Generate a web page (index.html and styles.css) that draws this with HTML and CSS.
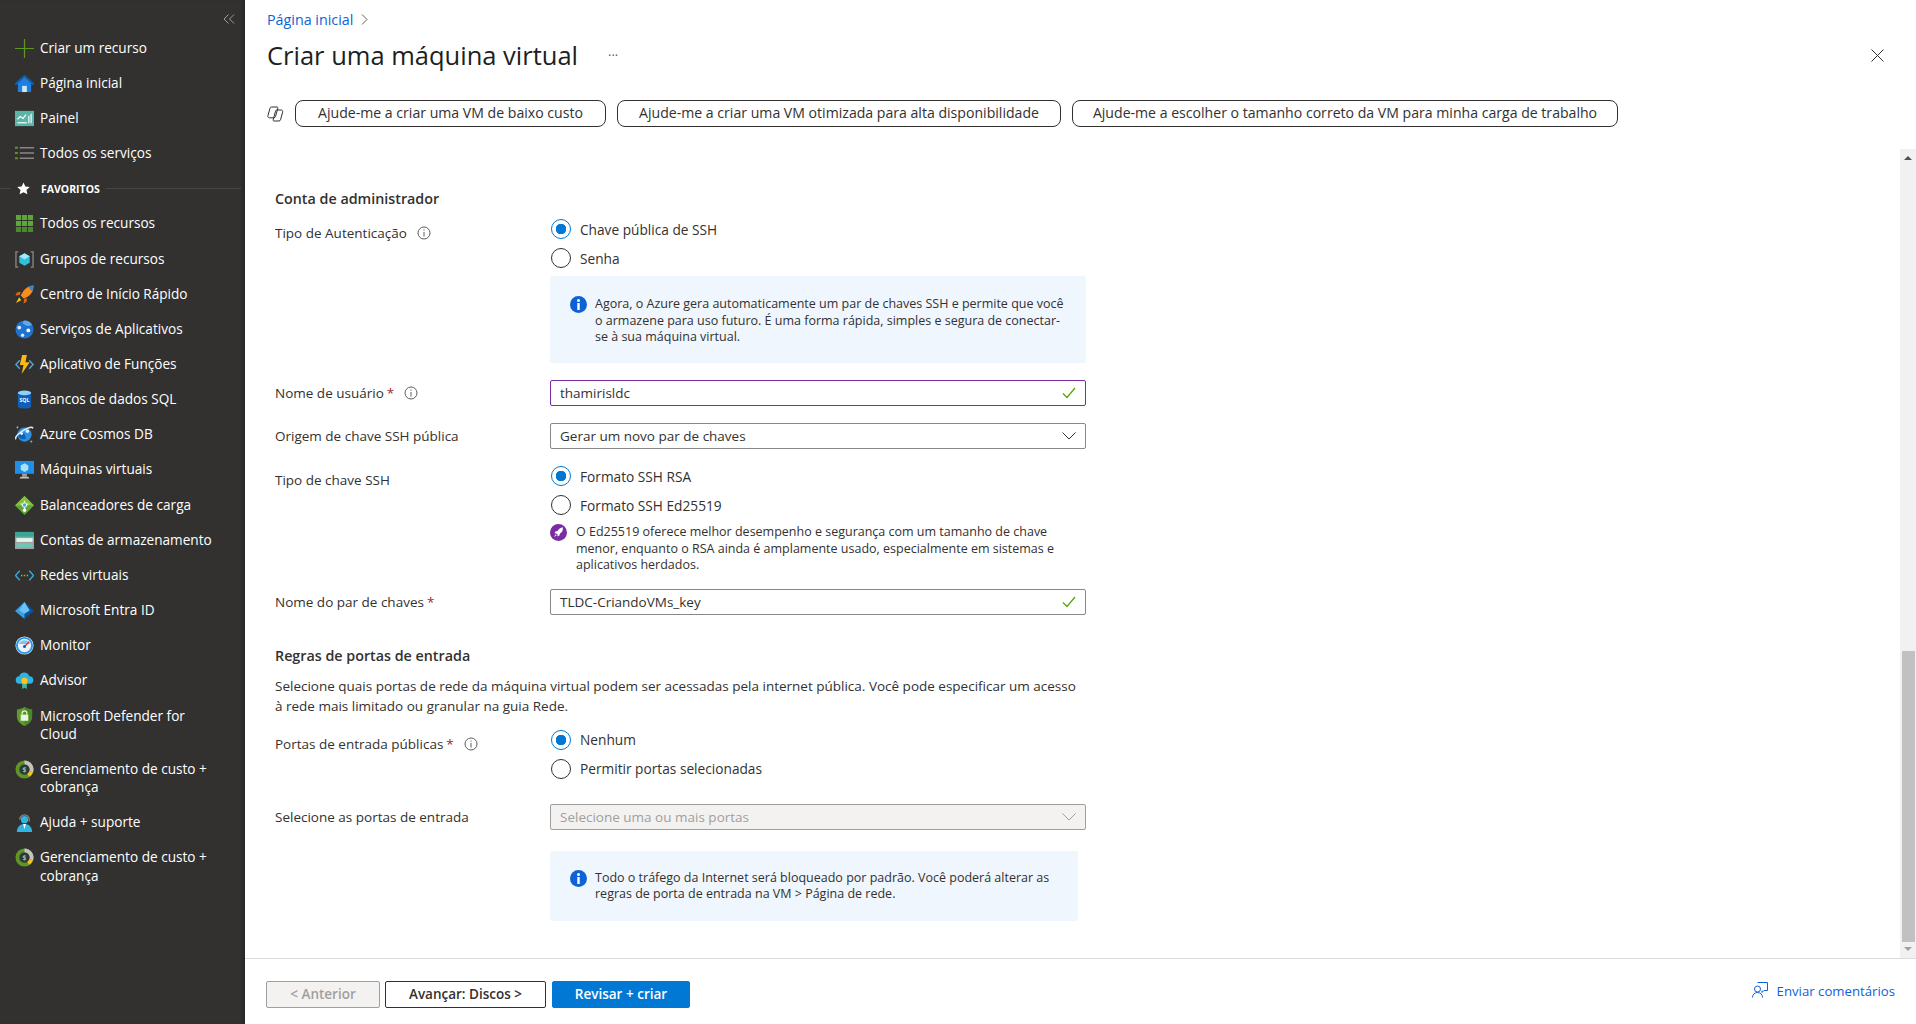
FILE: index.html
```html
<!DOCTYPE html>
<html lang="pt-BR">
<head>
  <meta charset="utf-8">
  <title>Criar uma máquina virtual</title>
  <link rel="stylesheet" href="styles.css">
</head>
<body>
  <svg class="sprite" width="0" height="0">
    <symbol id="i-info" viewBox="0 0 14 14"><circle cx="7" cy="7" r="6" fill="none" stroke="#605e5c"/><path d="M7 6v4.500M7 3.500v1.200" stroke="#605e5c" fill="none"/></symbol>
    <symbol id="i-note" viewBox="0 0 17 17"><circle cx="8.500" cy="8.500" r="8.500" fill="#0f62d6"/><rect x="7.300" y="7" width="2.400" height="7" fill="#fff"/><circle cx="8.500" cy="4.500" r="1.500" fill="#fff"/></symbol>
    <symbol id="i-check" viewBox="0 0 14 12"><path d="M1 6.500l4 4L13 1" fill="none" stroke="#57a300" stroke-width="1.200"/></symbol>
    <symbol id="i-chev" viewBox="0 0 14 8"><path d="M.5.500L7 7l6.500-6.500" fill="none" stroke="currentColor"/></symbol>
  </svg>

  <div class="portal">
    <nav class="sidebar">
      <div class="collapse">
        <svg width="12" height="10" viewBox="0 0 12 10"><path d="M5.500.500L1 5l4.500 4.500M11 .500L6.500 5 11 9.500" fill="none" stroke="#a19f9d"/></svg>
      </div>
      <a class="nav-item">
        <svg class="nav-icon" viewBox="0 0 20 20"><path d="M0 10h20M10 0v20" stroke="#5e9624" stroke-width="1.300"/></svg>
        <span>Criar um recurso</span>
      </a>
      <a class="nav-item">
        <svg class="nav-icon" viewBox="0 0 20 20"><path d="M10 1L0 10l1 1.500L3 10v9h14v-9l2 1.500 1-1.500z" fill="#1f7fdc"/><path d="M10 1L0 10l1 1.500L10 3.500l9 8 1-1.500z" fill="#0f5ba8"/><rect x="7.500" y="12.500" width="5" height="6.500" fill="#cfe6f8"/></svg>
        <span>Página inicial</span>
      </a>
      <a class="nav-item">
        <svg class="nav-icon" viewBox="0 0 20 20"><rect y="2" width="20" height="16" fill="#5bb5a7"/><path d="M2.500 11l3-3 3 2 3-4" fill="none" stroke="#fff" stroke-width="1.200"/><path d="M2.500 14.500h10" stroke="#fff" stroke-width="1.200"/><path d="M14.500 7v8M17 5v10" stroke="#d9efeb" stroke-width="1.500"/></svg>
        <span>Painel</span>
      </a>
      <a class="nav-item">
        <svg class="nav-icon" viewBox="0 0 20 20"><path d="M5 4h15M5 9.500h15M5 15h15" stroke="#8a8886" stroke-width="1.500"/><path d="M0 4h3M0 9.500h3M0 15h3" stroke="#5e9624" stroke-width="2.200"/></svg>
        <span>Todos os serviços</span>
      </a>
      <div class="nav-group">
        <span class="group-line short"></span>
        <svg class="group-star" viewBox="0 0 14 14"><path d="M7 .500l2 4.400 4.700.500-3.500 3.200 1 4.700L7 11l-4.200 2.300 1-4.700L.300 5.400 5 4.900z" fill="#fff"/></svg>
        <span class="group-name">FAVORITOS</span>
        <span class="group-line"></span>
      </div>
      <a class="nav-item">
        <svg class="nav-icon" viewBox="0 0 20 20"><path d="M1 1h5.400v5.400H1zM7.300 1h5.400v5.400H7.300zM13.600 1H19v5.400h-5.400zM1 7.300h5.400v5.400H1zM7.300 7.300h5.400v5.400H7.300zM13.600 7.300H19v5.400h-5.400z" fill="#5ea53a"/><path d="M1 13.600h5.400V19H1zM7.300 13.600h5.400V19H7.300zM13.600 13.600H19V19h-5.400z" fill="#4a8a2c"/></svg>
        <span>Todos os recursos</span>
      </a>
      <a class="nav-item">
        <svg class="nav-icon" viewBox="0 0 20 20"><path d="M3.500 2H1v16h2.500M16.500 2H19v16h-2.500" fill="none" stroke="#8a8886" stroke-width="1.400"/><path d="M10 3.500l5.500 3.200v6.600L10 16.500l-5.500-3.200V6.700z" fill="#32bedd"/><path d="M10 3.500l5.500 3.200L10 10 4.500 6.700z" fill="#9cebff"/></svg>
        <span>Grupos de recursos</span>
      </a>
      <a class="nav-item">
        <svg class="nav-icon" viewBox="0 0 20 20"><path d="M19.500.500c-4.500.300-8 2.200-10.500 5.500l-3 5 3.500 3.500 5-3c3.200-2.500 5-6 5-10.500z" fill="#f78d1e"/><path d="M19.500.500c-2.500.200-4.300.700-5.800 1.700l4.100 4.100c1-1.500 1.500-3.300 1.700-5.800z" fill="#2f88d8"/><path d="M6 7L2 8l-1.500 3L5 10.500zM13 14l-1 4-3 1.500.5-4.500z" fill="#d9661a"/><path d="M4.500 13L1 19l5.500-3z" fill="#fcc419"/></svg>
        <span>Centro de Início Rápido</span>
      </a>
      <a class="nav-item">
        <svg class="nav-icon" viewBox="0 0 20 20"><circle cx="10" cy="10" r="9.500" fill="#1f72cf"/><path d="M10 .500a9.500 9.500 0 0 1 8 4.500c-3 2-7 1.500-10-1.500C8 2 9 1 10 .500z" fill="#5ea9ea"/><circle cx="4.500" cy="8" r="2" fill="#d6ecfb"/><circle cx="14" cy="11" r="2" fill="#fff"/><circle cx="8" cy="16" r="1.800" fill="#d6ecfb"/></svg>
        <span>Serviços de Aplicativos</span>
      </a>
      <a class="nav-item">
        <svg class="nav-icon" viewBox="0 0 20 20"><path d="M4.500 5L0 10l4.500 5 1-1L2 10l3.500-4zM15.500 5L20 10l-4.500 5-1-1 3.500-4-3.500-4z" fill="#4ba9e8"/><path d="M12.500 0H7.500L5 10.500h4L7 20l8.500-12.500H11z" fill="#fcb714"/></svg>
        <span>Aplicativo de Funções</span>
      </a>
      <a class="nav-item">
        <svg class="nav-icon" viewBox="0 0 20 20"><path d="M3 3v14c0 1.500 3 2.500 7 2.500s7-1 7-2.500V3z" fill="#0f5fb8"/><ellipse cx="10" cy="3" rx="7" ry="2.500" fill="#8ed3f7"/><text x="10" y="12.500" class="sql-label">SQL</text></svg>
        <span>Bancos de dados SQL</span>
      </a>
      <a class="nav-item">
        <svg class="nav-icon" viewBox="0 0 20 20"><circle cx="10" cy="10" r="7.500" fill="#2f8fe0"/><path d="M3.500 7.500c2.500-.800 5 .200 6.500 2.500s1.500 4 .500 5c-3 .500-6-1-7-3.500z" fill="#0f5fb8"/><path d="M1 15c-1.500-2 3-6.500 8-9.500S18 1.500 19 3.500" fill="none" stroke="#cdeefc" stroke-width="1.600"/><circle cx="7" cy="9" r="1.500" fill="#fff"/><circle cx="13" cy="6.500" r="1.800" fill="#dff3fc"/><path d="M2.500 .500l.500 1.500 1.500.500-1.500.500-.500 1.500-.500-1.500L.500 2.500 2 2zM17 15.500l.500 1.500 1.500.500-1.500.500-.500 1.500-.500-1.500-1.500-.500 1.500-.500z" fill="#50c8ea"/></svg>
        <span>Azure Cosmos DB</span>
      </a>
      <a class="nav-item">
        <svg class="nav-icon" viewBox="0 0 20 20"><rect y="1" width="20" height="13.500" fill="#1f8fe8"/><path d="M10 3.500l4 2.300v4.400l-4 2.300-4-2.300V5.800z" fill="#a9e3fb"/><path d="M7.500 14.500h5v3h-5z" fill="#a19f9d"/><path d="M5 19.500c0-1.500 1-2 2-2h6c1 0 2 .500 2 2z" fill="#c8c6c4"/></svg>
        <span>Máquinas virtuais</span>
      </a>
      <a class="nav-item">
        <svg class="nav-icon" viewBox="0 0 20 20"><path d="M10 0l10 10-10 10L0 10z" fill="#5ea53a"/><path d="M10 0l10 10H0z" fill="#86c043"/><path d="M10 5v10M6 8l4 3 4-3" stroke="#e5f5d0" stroke-width="1.100" fill="none"/><circle cx="10" cy="9.500" r="2.300" fill="#4d9be0" stroke="#fff"/><circle cx="10" cy="15" r="1.800" fill="#fff"/></svg>
        <span>Balanceadores de carga</span>
      </a>
      <a class="nav-item">
        <svg class="nav-icon" viewBox="0 0 20 20"><rect y="1" width="20" height="18" fill="#a19f9d"/><rect y="1" width="20" height="5" fill="#37a596"/><rect x="1.500" y="7.500" width="17" height="4" fill="#dff5f0"/><rect x="1.500" y="12.800" width="17" height="4.500" fill="#6dc6b6"/></svg>
        <span>Contas de armazenamento</span>
      </a>
      <a class="nav-item">
        <svg class="nav-icon" viewBox="0 0 20 20"><path d="M5 5l-4.500 5L5 15M15 5l4.500 5-4.500 5" fill="none" stroke="#35a8e6" stroke-width="1.500"/><path d="M6.300 10h1.500M9.300 10h1.500M12.300 10h1.500" stroke="#86c043" stroke-width="1.800"/></svg>
        <span>Redes virtuais</span>
      </a>
      <a class="nav-item">
        <svg class="nav-icon" viewBox="0 0 20 20"><path d="M10 1l10 9.500-10 8.500z" fill="#0f4f9e"/><path d="M10 1L0 10.500 10 19z" fill="#37a0ea"/><path d="M10 1L4.500 10l5.500 3.500 5.500-3.500z" fill="#6dc2f4"/></svg>
        <span>Microsoft Entra ID</span>
      </a>
      <a class="nav-item">
        <svg class="nav-icon" viewBox="0 0 20 20"><circle cx="10" cy="10" r="9.500" fill="#e8f3fb"/><circle cx="10" cy="10" r="8" fill="none" stroke="#2b97e4" stroke-width="2"/><path d="M4 8.500a6.500 6.500 0 0 1 12 0z" fill="#7cc6ee"/><path d="M10 11l5-5" stroke="#d13438" stroke-width="1.300"/><circle cx="10" cy="11" r="1.600" fill="#0f5fb8"/></svg>
        <span>Monitor</span>
      </a>
      <a class="nav-item">
        <svg class="nav-icon" viewBox="0 0 20 20"><path d="M5 13.500a4 4 0 0 1-.500-8 5.500 5.500 0 0 1 10.500 0 4 4 0 0 1 .500 8z" fill="#2fb5e0"/><path d="M7.500 13v6l2.500-1.500 2.500 1.500v-6z" fill="#3fb5a5"/><circle cx="10" cy="10.500" r="3.300" fill="#fcc419"/></svg>
        <span>Advisor</span>
      </a>
      <a class="nav-item">
        <svg class="nav-icon" viewBox="0 0 20 20"><path d="M10 0c2.500 1.800 5 2.500 8 2.500v7.500c0 4.500-3.500 8-8 10-4.500-2-8-5.500-8-10V2.500C5 2.500 7.500 1.800 10 0z" fill="#5e9c2d"/><path d="M10 0c2.500 1.800 5 2.500 8 2.500v7.500c0 4.500-3.500 8-8 10z" fill="#4a8a24"/><rect x="6" y="8" width="8" height="6.500" fill="#e9f5df"/><path d="M7.500 8V6.500a2.500 2.500 0 0 1 5 0V8" fill="none" stroke="#e9f5df" stroke-width="1.300"/></svg>
        <span>Microsoft Defender for<br>Cloud</span>
      </a>
      <a class="nav-item">
        <svg class="nav-icon" viewBox="0 0 20 20"><circle cx="10" cy="10" r="7.500" fill="#32383a" stroke="#5e9624" stroke-width="4"/><path d="M10 .500A9.500 9.500 0 0 1 19 13l-3.700-1.300A5.500 5.500 0 0 0 10 4.500z" fill="#c4c3c2"/><path d="M19 13a9.500 9.500 0 0 1-4 4.600l-1.900-3.200a5.500 5.500 0 0 0 2.200-2.700z" fill="#fcc419"/><text x="10" y="12.500" class="cost-sign">$</text></svg>
        <span>Gerenciamento de custo +<br>cobrança</span>
      </a>
      <a class="nav-item">
        <svg class="nav-icon" viewBox="0 0 20 20"><path d="M5 7a5 5 0 0 1 10 0v2" fill="none" stroke="#8a8886" stroke-width="1.300"/><circle cx="10" cy="7" r="3.800" fill="#2fb5e0"/><path d="M2 20c0-5 3-8.500 8-8.500s8 3.500 8 8.500z" fill="#2fb5e0"/><path d="M8.500 11.500h3L10 17z" fill="#fff"/></svg>
        <span>Ajuda + suporte</span>
      </a>
      <a class="nav-item">
        <svg class="nav-icon" viewBox="0 0 20 20"><circle cx="10" cy="10" r="7.500" fill="#32383a" stroke="#5e9624" stroke-width="4"/><path d="M10 .500A9.500 9.500 0 0 1 19 13l-3.700-1.300A5.500 5.500 0 0 0 10 4.500z" fill="#c4c3c2"/><path d="M19 13a9.500 9.500 0 0 1-4 4.600l-1.900-3.200a5.500 5.500 0 0 0 2.200-2.700z" fill="#fcc419"/><text x="10" y="12.500" class="cost-sign">$</text></svg>
        <span>Gerenciamento de custo +<br>cobrança</span>
      </a>
    </nav>

    <main class="blade">
      <header class="blade-head">
        <div class="breadcrumb">
          <a>Página inicial</a>
          <svg width="7" height="11" viewBox="0 0 7 11"><path d="M1 .500l5 5-5 5" fill="none" stroke="#605e5c"/></svg>
        </div>
        <div class="title-row">
          <h1>Criar uma máquina virtual</h1>
          <span class="title-more">···</span>
          <svg class="close" width="13" height="13" viewBox="0 0 13 13"><path d="M.500.500l12 12M12.500.500l-12 12" stroke="#323130"/></svg>
        </div>
        <div class="prompts">
          <svg class="copilot" viewBox="0 0 17 17"><path d="M4.500 2H10c.800 0 1 .500.800 1.200L8.500 11.500c-.200.800-.800 1.300-1.600 1.300H2.500c-1.200 0-2-1-1.600-2.100L3 3.200C3.200 2.500 3.700 2 4.500 2z" fill="none" stroke="#323130"/><path d="M9.500 5H14c1.200 0 2 1 1.700 2.100l-2.200 7.700c-.200.700-.700 1.200-1.500 1.200H7c-.800 0-1-.500-.800-1.200L8.500 6.200C8.700 5.500 9 5 9.500 5z" fill="none" stroke="#323130"/></svg>
          <button class="prompt">Ajude-me a criar uma VM de baixo custo</button>
          <button class="prompt mid">Ajude-me a criar uma VM otimizada para alta disponibilidade</button>
          <button class="prompt wide">Ajude-me a escolher o tamanho correto da VM para minha carga de trabalho</button>
        </div>
      </header>

      <div class="scroll-area">
        <form class="form">
          <h2>Conta de administrador</h2>

          <div class="row radios-row first">
            <label class="field-label">Tipo de Autenticação <svg class="hint"><use href="#i-info"/></svg></label>
            <div>
              <div class="radio on"><span class="dot"></span>Chave pública de SSH</div>
              <div class="radio"><span class="dot"></span>Senha</div>
              <div class="note-box">
                <svg class="note-icon"><use href="#i-note"/></svg>
                <p>Agora, o Azure gera automaticamente um par de chaves SSH e permite que você<br>o armazene para uso futuro. É uma forma rápida, simples e segura de conectar-<br>se à sua máquina virtual.</p>
              </div>
            </div>
          </div>

          <div class="row">
            <label class="field-label">Nome de usuário <em>*</em> <svg class="hint"><use href="#i-info"/></svg></label>
            <div class="control focused">thamirisldc<svg class="check"><use href="#i-check"/></svg></div>
          </div>

          <div class="row">
            <label class="field-label">Origem de chave SSH pública</label>
            <div class="control">Gerar um novo par de chaves<svg class="chev"><use href="#i-chev"/></svg></div>
          </div>

          <div class="row radios-row">
            <label class="field-label">Tipo de chave SSH</label>
            <div>
              <div class="radio on"><span class="dot"></span>Formato SSH RSA</div>
              <div class="radio"><span class="dot"></span>Formato SSH Ed25519</div>
              <div class="tip">
                <svg class="tip-icon" viewBox="0 0 17 17"><circle cx="8.500" cy="8.500" r="8.500" fill="#7a2da0"/><path d="M12.800 3.200C10.400 3.700 8.600 5 7.500 7L5.400 7.600 4.500 9.300l1.900.200 1.100 1.100.200 1.900 1.700-.900.600-2.100c2-1.100 3.300-3 2.800-6.300zM5.700 10.300L4 13l2.700-1.700z" fill="#fff"/></svg>
                <p>O Ed25519 oferece melhor desempenho e segurança com um tamanho de chave<br>menor, enquanto o RSA ainda é amplamente usado, especialmente em sistemas e<br>aplicativos herdados.</p>
              </div>
            </div>
          </div>

          <div class="row tight">
            <label class="field-label">Nome do par de chaves <em>*</em></label>
            <div class="control">TLDC-CriandoVMs_key<svg class="check"><use href="#i-check"/></svg></div>
          </div>

          <h2 class="section">Regras de portas de entrada</h2>
          <p class="intro">Selecione quais portas de rede da máquina virtual podem ser acessadas pela internet pública. Você pode especificar um acesso<br>à rede mais limitado ou granular na guia Rede.</p>

          <div class="row radios-row ports">
            <label class="field-label">Portas de entrada públicas <em>*</em> <svg class="hint"><use href="#i-info"/></svg></label>
            <div>
              <div class="radio on"><span class="dot"></span>Nenhum</div>
              <div class="radio"><span class="dot"></span>Permitir portas selecionadas</div>
            </div>
          </div>

          <div class="row after-radios">
            <label class="field-label">Selecione as portas de entrada</label>
            <div class="control disabled">Selecione uma ou mais portas<svg class="chev"><use href="#i-chev"/></svg></div>
          </div>

          <div class="row box-row">
            <span></span>
            <div class="note-box short">
              <svg class="note-icon"><use href="#i-note"/></svg>
              <p>Todo o tráfego da Internet será bloqueado por padrão. Você poderá alterar as<br>regras de porta de entrada na VM &gt; Página de rede.</p>
            </div>
          </div>
        </form>

        <div class="scrollbar">
          <span class="arrow up"></span>
          <div class="track"><div class="thumb"></div></div>
          <span class="arrow down"></span>
        </div>
      </div>

      <footer class="blade-foot">
        <button class="btn btn-off">&lt; Anterior</button>
        <button class="btn btn-next">Avançar: Discos &gt;</button>
        <button class="btn btn-main">Revisar + criar</button>
        <a class="feedback">
          <svg width="16" height="17" viewBox="0 0 16 17"><path d="M5.500 1.500h10v8H12l-2 2V9.500" fill="none" stroke="#0f62d6"/><circle cx="5.500" cy="8" r="3" fill="#fff" stroke="#0f62d6"/><path d="M.500 16.500c0-3 2-5 5-5s5 2 5 5" fill="none" stroke="#0f62d6"/></svg>
          Enviar comentários
        </a>
      </footer>
    </main>
  </div>
</body>
</html>
```

FILE: styles.css
```css
/* General Reset */
body, h1, h2, p, button {
  margin: 0;
  padding: 0;
}

body {
  font-family: "Open Sans", "Noto Sans", sans-serif;
  font-size: 13.500px;
  color: #323130;
  background: #fff;
  overflow: hidden;
}

.sprite {
  position: absolute;
}

.portal {
  display: flex;
  height: 1024px;
}

/* Sidebar */
.sidebar {
  flex: 0 0 245px;
  background: #323130;
  color: #fff;
  font-size: 13.600px;
  box-shadow: inset -4px 0 3px -1px rgba(0, 0, 0, 0.18);
}

.collapse {
  height: 30.500px;
  box-sizing: border-box;
  padding: 9px 5px 0 0;
  text-align: right;
  width: 240px;
}

.nav-item {
  display: flex;
  gap: 6px;
  padding: 8.080px 0 8.080px 15px;
  line-height: 18.500px;
}

.nav-icon {
  flex: 0 0 19px;
  width: 19px;
  height: 19px;
}

.nav-group {
  display: flex;
  align-items: center;
  height: 35.160px;
  font-size: 10.500px;
  font-weight: 700;
}

.group-line {
  flex: 1;
  height: 1px;
  background: #484644;
  margin: 0 4px 0 6px;
}

.group-line.short {
  flex: 0 0 11px;
  margin: 0;
}

.group-star {
  width: 13px;
  height: 13px;
  margin: 0 11px 0 6px;
}

.cost-sign {
  font-size: 7px;
  font-weight: 700;
  fill: #8fc7b0;
  text-anchor: middle;
}

.sql-label {
  font-size: 5.500px;
  font-weight: 700;
  fill: #fff;
  text-anchor: middle;
}

/* Blade */
.blade {
  flex: 1;
  display: flex;
  flex-direction: column;
  min-width: 0;
}

.blade-head {
  padding: 9px 32px 0 22px;
}

.breadcrumb {
  display: flex;
  align-items: center;
  gap: 8px;
  height: 20px;
  font-size: 14.300px;
  color: #0f62d6;
}

.title-row {
  display: flex;
  align-items: center;
  margin-top: 8px;
  height: 36px;
}

h1 {
  font-size: 25.500px;
  font-weight: 500;
  color: #201f1e;
}

.title-more {
  margin-left: 30px;
  font-size: 13px;
  color: #605e5c;
}

.close {
  margin-left: auto;
}

.prompts {
  display: flex;
  align-items: center;
  margin-top: 27px;
  margin-bottom: 22px;
  height: 27px;
}

.copilot {
  width: 17px;
  height: 17px;
  margin-right: 11px;
}

.prompt {
  width: 311px;
  height: 27px;
  margin-right: 11px;
  padding-bottom: 3px;
  background: #fff;
  border: 1px solid #323130;
  border-radius: 8px;
  font: 500 14.100px "Open Sans", sans-serif;
  color: #323130;
}

.prompt.mid {
  width: 444px;
}

.prompt.wide {
  width: 546px;
}

/* Form */
.scroll-area {
  flex: 1;
  display: flex;
  min-height: 0;
}

.form {
  flex: 1;
  padding: 40px 0 0 30px;
}

h2 {
  font-size: 14.300px;
  font-weight: 600;
  line-height: 20px;
}

.section {
  margin-top: 31px;
}

.row {
  display: grid;
  grid-template-columns: 275px 536px;
  align-items: center;
  margin-top: 17px;
}

.row.first {
  margin-top: 10px;
}

.row.tight {
  margin-top: 15px;
}

.row.ports {
  margin-top: 14px;
}

.row.after-radios {
  margin-top: 16px;
}

.row.box-row {
  margin-top: 21px;
}

.radios-row {
  align-items: start;
}

.radios-row .field-label {
  padding-top: 4px;
}

.field-label {
  display: flex;
  align-items: center;
  gap: 6px;
  line-height: 20px;
}

.field-label em {
  font-style: normal;
  color: #a4262c;
  margin-left: -3px;
}

.hint {
  width: 14px;
  height: 14px;
  margin-left: 4px;
}

.radio {
  display: flex;
  align-items: center;
  gap: 9px;
  height: 20px;
  margin-bottom: 9px;
  padding-left: 1px;
  font-size: 13.700px;
}

.radio .dot {
  box-sizing: border-box;
  width: 20px;
  height: 20px;
  border: 1px solid #323130;
  border-radius: 50%;
}

.radio.on .dot {
  border: 1.500px solid #0078d4;
  background: radial-gradient(circle, #0078d4 5px, #fff 5.500px);
}

.note-box {
  display: flex;
  gap: 8px;
  box-sizing: border-box;
  height: 87px;
  padding: 20px 0 0 20px;
  margin-top: -1px;
  background: #eff6fe;
  border-radius: 2px;
  font-size: 12.500px;
  line-height: 16.500px;
}

.note-box.short {
  width: 528px;
  height: 70px;
  margin-top: 0;
  padding-top: 19px;
}

.note-icon {
  flex: 0 0 17px;
  width: 17px;
  height: 17px;
}

.tip {
  display: flex;
  gap: 9px;
  font-size: 12.500px;
  line-height: 16.500px;
  margin-top: 1px;
}

.tip-icon {
  flex: 0 0 17px;
  width: 17px;
  height: 17px;
}

.control {
  display: flex;
  align-items: center;
  justify-content: space-between;
  box-sizing: border-box;
  height: 26px;
  padding: 0 9px 0 9px;
  border: 1px solid #8a8886;
  border-radius: 2px;
}

.control.focused {
  border-color: #7a2da0;
}

.control.disabled {
  background: #f3f2f1;
  border-color: #a19f9d;
  color: #a19f9d;
}

.check {
  width: 14px;
  height: 12px;
}

.chev {
  width: 14px;
  height: 8px;
  color: #323130;
}

.control.disabled .chev {
  color: #a19f9d;
}

.intro {
  margin-top: 10px;
  line-height: 20px;
}

/* Scrollbar */
.scrollbar {
  flex: 0 0 16px;
  display: flex;
  flex-direction: column;
  align-items: center;
  background: #f1f1f1;
}

.arrow {
  flex: 0 0 4px;
  width: 0;
  height: 0;
  box-sizing: border-box;
  border-left: 4px solid transparent;
  border-right: 4px solid transparent;
}

.arrow.up {
  border-bottom: 4px solid #505050;
  margin: 7px 0 6px;
}

.arrow.down {
  border-top: 4px solid #a0a0a0;
  margin: 5px 0 7px;
}

.track {
  flex: 1;
  width: 100%;
  display: flex;
  flex-direction: column;
  justify-content: flex-end;
}

.thumb {
  height: 291px;
  margin: 0 1px 0 2px;
  background: #c1c1c1;
}

/* Footer */
.blade-foot {
  flex: 0 0 66px;
  box-sizing: border-box;
  display: flex;
  align-items: flex-start;
  gap: 5px;
  padding: 22px 21px 0 21px;
  border-top: 1px solid #dcdcdc;
}

.btn {
  height: 27px;
  padding-bottom: 2px;
  font: 600 13.500px "Open Sans", sans-serif;
  border-radius: 2px;
}

.btn-off {
  width: 114px;
  background: #f3f2f1;
  border: 1px solid #a19f9d;
  color: #a19f9d;
}

.btn-next {
  width: 161px;
  background: #fff;
  border: 1px solid #323130;
  color: #323130;
}

.btn-main {
  width: 138px;
  margin-left: 1px;
  background: #0078d4;
  border: 1px solid #0078d4;
  color: #fff;
}

.feedback {
  display: flex;
  align-items: center;
  gap: 9px;
  margin-left: auto;
  font-size: 13.200px;
  color: #0f62d6;
  height: 20px;
}

.feedback svg {
  margin-top: -4px;
}
```
